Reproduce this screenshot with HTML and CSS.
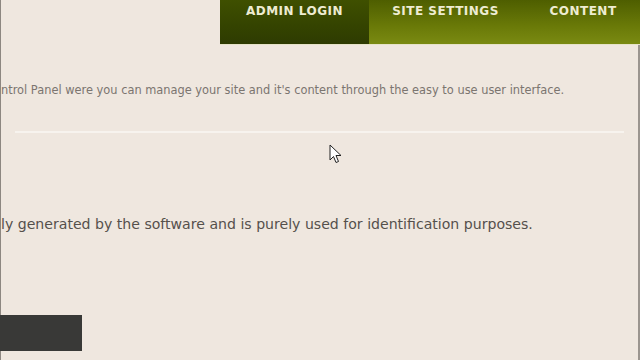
FILE: index.html
```html
<!DOCTYPE html>
<html lang="en">
<head>
  <meta charset="UTF-8">
  <title>Control Panel</title>
  <link rel="stylesheet" href="styles.css">
</head>
<body>
  <div class="page">
    <div class="top">
      <ul class="nav">
        <li class="active">Admin Login</li>
        <li>Site Settings</li>
        <li>Content</li>
      </ul>
    </div>

    <div class="content">
      <p class="intro">ntrol Panel were you can manage your site and it's content through the easy to use user interface.</p>
      <hr class="rule">

      <p class="note">ly generated by the software and is purely used for identification purposes.</p>

      <div class="btn"></div>
    </div>
  </div>

  <!-- mouse pointer -->
  <svg class="cursor" width="13" height="20" viewBox="0 0 13 20">
    <path d="M1 1 L1 16 L4.5 12.5 L7 18.5 L9.5 17.5 L7 11.5 L12 11.5 Z" fill="#fff" stroke="#222" stroke-width="1"/>
  </svg>
</body>
</html>
```

FILE: styles.css
```css
body {
  margin: 0;
  background: #efe7df;
  font-family: "DejaVu Sans", Verdana, sans-serif;
  overflow: hidden;
}

.page {
  height: 360px;
  border-left: 1px solid #8d8781;
  box-sizing: border-box;
  position: relative;
}

.top {
  display: flex;
  justify-content: flex-end;
}

.nav {
  display: flex;
  list-style: none;
  margin: 0;
  padding: 0;
  height: 44px;
  border-bottom: 1px solid #e6e3c8;
}

.nav li {
  box-sizing: border-box;
  flex-shrink: 0;
  display: flex;
  align-items: flex-start;
  justify-content: center;
  padding-top: 3px;
  text-transform: uppercase;
  letter-spacing: 0.5px;
  font-size: 12px;
  font-weight: bold;
  line-height: 16px;
  color: #eeecd2;
  width: 153px;
  background: linear-gradient(180deg, #4e5e00 0%, #6a7a08 60%, #7a8a12 100%);
}

.nav li.active {
  width: 149px;
  background: linear-gradient(180deg, #3f5000 0%, #344300 60%, #2e3b02 100%);
}

.nav li:last-child {
  width: 118px;
  padding-left: 4px;
}

.content {
  border-right: 2px solid #9b958f;
  height: 315px;
}

.intro {
  margin: 0;
  padding-top: 38px;
  font-size: 11.4px;
  color: #7b7570;
  white-space: nowrap;
}

.rule {
  margin: 34px 14px 0 14px;
  border: none;
  height: 2px;
  background: #f7f3ee;
}

.note {
  margin: 83px 0 0;
  font-size: 14.1px;
  color: #55504c;
  white-space: nowrap;
}

.btn {
  margin-top: 83px;
  margin-left: -1px;
  width: 82px;
  height: 36px;
  background: #393937;
}

.cursor {
  position: absolute;
  left: 329px;
  top: 144px;
}
```
